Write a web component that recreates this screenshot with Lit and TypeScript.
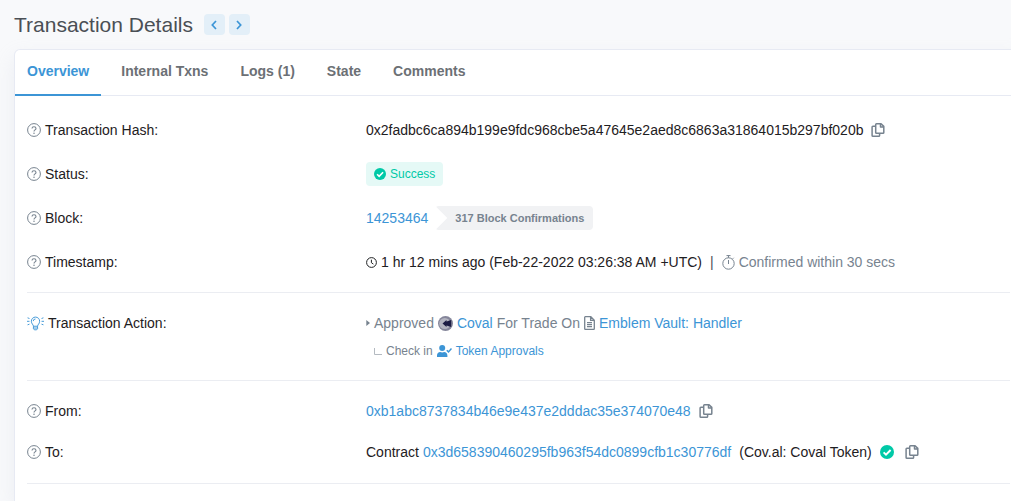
import { LitElement, html, css, svg } from "lit";
import { customElement, property, state } from "lit/decorators.js";
import { classMap } from "lit/directives/class-map.js";

const draw = (w: number, h: number, box: string, body: unknown, cls: string) => html`<svg class="icon ${cls}" width=${w} height=${h} viewBox=${box} aria-hidden="true">${body}</svg>`;

const icons = {
  help: () =>
    draw(14, 14, "0 0 14 14", svg`
      <circle cx="7" cy="7" r="6.4" fill="none" stroke="currentColor" stroke-width="1"/>
      <path d="M5 5.5C5 4.3 5.9 3.7 7 3.7s2 .7 2 1.7c0 1.4-2 1.5-2 3" fill="none" stroke="currentColor" stroke-width="1.1"/>
      <circle cx="7" cy="10.2" r=".75" fill="currentColor"/>`, "muted"),
  copy: () =>
    draw(14, 14, "0 0 14 14", svg`
      <path d="M5.500 .8h4.600L12.800 3.400v6.100a.8.8 0 0 1-.8.8H5.500a.8.8 0 0 1-.8-.8V1.600a.8.8 0 0 1 .8-.8zM9.500 .8v3.200h3.300M4.700 3.300H1.900a.8.8 0 0 0-.8.8v8.300a.8.8 0 0 0 .8.8h5.900a.8.8 0 0 0 .8-.8v-2.100" fill="none" stroke="currentColor" stroke-width="1.500" stroke-linejoin="round"/>`, "muted"),
  check: (size: number) =>
    draw(size, size, "0 0 14 14", svg`
      <circle cx="7" cy="7" r="7" fill="currentColor"/>
      <path d="M3.600 7.300l2.400 2.400 4.600-4.700" fill="none" stroke="#fff" stroke-width="1.900"/>`, "good"),
  clock: () =>
    draw(11, 11, "0 0 11 11", svg`
      <circle cx="5.500" cy="5.500" r="4.900" fill="none" stroke="currentColor" stroke-width="1"/>
      <path d="M5.400 2.700v3l2 1.400" fill="none" stroke="currentColor" stroke-width="1"/>`, ""),
  stopwatch: () =>
    draw(13, 15, "0 0 13 15", svg`
      <circle cx="6.500" cy="8.500" r="5.700" fill="none" stroke="currentColor"/>
      <path d="M4.500 .6h4M6.500 .6v2.200M6.500 5v4M10.700 3.800l1-1" fill="none" stroke="currentColor"/>`, "muted"),
  bulb: () =>
    draw(17, 15, "0 0 18 15", svg`
      <path d="M6.800 10.400c0-1.700-2.200-2.600-2.200-5.300a4.400 4.400 0 0 1 8.800 0c0 2.700-2.200 3.600-2.200 5.300zM6.800 10.400v2.600l1 1.200h2.400l1-1.200v-2.600M6.800 12.300h4.400M6.600 5A2.400 2.400 0 0 1 9 2.700M.6 1.500l2 .7M0 5.200h2.600M.6 8.900l2-.7M17.400 1.500l-2 .7M18 5.200h-2.600M17.400 8.900l-2-.7" fill="none" stroke="currentColor" stroke-width="1"/>`, "brand"),
  caret: () => draw(4, 6, "0 0 4 6", svg`<path d="M.3 0L4 3 .3 6z" fill="currentColor"/>`, "muted"),
  coin: () =>
    draw(15, 15, "0 0 15 15", svg`
      <circle cx="7.500" cy="7.500" r="7.500" fill="#85869a"/>
      <circle cx="6.800" cy="7.500" r="5.600" fill="#b3b4c0"/>
      <path d="M4.500 7.500L8.500 4v1.600l4.700-1.600v7L8.500 9.400V11z" fill="#1c1c44"/>`, ""),
  file: () =>
    draw(11, 14, "0 0 11 14", svg`
      <path d="M1.300 .7h5.500l3.500 3.500v8.500a.6.6 0 0 1-.6.6H1.300a.6.6 0 0 1-.6-.6V1.300a.6.6 0 0 1 .6-.6zM6.600 .7v3.700h3.700M3 6.600h5M3 8.600h5M3 10.600h5" fill="none" stroke="currentColor" stroke-width="1.300"/>`, "muted"),
  userCheck: () =>
    draw(15, 12, "0 0 15 12", svg`
      <circle cx="5.200" cy="3" r="3" fill="currentColor"/>
      <path d="M0 12v-1.600C0 8.400 1.400 7 3.200 7c1.300.5 2.700.5 4 0 1.800 0 3.200 1.400 3.200 3.400V12z" fill="currentColor"/>
      <path d="M9.800 5.200l1.700 1.700 3-3.400" fill="none" stroke="currentColor" stroke-width="1.500"/>`, "brand"),
  elbow: () => draw(8, 7, "0 0 8 7", svg`<path d="M.5 0v6.500H8" fill="none" stroke="#b4bac1"/>`, ""),
  chevron: (d: string) =>
    draw(6, 10, "0 0 6 10", svg`<path d=${d} fill="none" stroke="currentColor" stroke-width="1.700"/>`, ""),
};

const shared = css`
  .icon { display: block; flex: none; }
  .muted { color: #77838f; }
  .brand { color: #3c95d6; }
  .good { color: #00c9a7; }
`;

@customElement("detail-row")
export class DetailRow extends LitElement {
  @property() label = "";
  @property() icon: "help" | "bulb" = "help";

  static styles = [shared, css`
    :host { display: grid; grid-template-columns: 339px 1fr; align-items: start; }
    .label { display: flex; align-items: center; gap: 4px; line-height: 24px; }
    .value { min-width: 0; }
  `];

  render() {
    return html`
      <div class="label">${icons[this.icon]()}<span>${this.label}</span></div>
      <div class="value"><slot></slot></div>
    `;
  }
}

@customElement("app-root")
export class AppRoot extends LitElement {
  @state() private tab = "Overview";

  static styles = [shared, css`
    :host {
      display: block; box-sizing: border-box; min-height: 100vh; padding-left: 14px; overflow: hidden;
      background: #f8f9fb; color: #1e2022; font: 14px/24px "Liberation Sans", Arial, sans-serif;
    }
    a { color: #3c95d6; text-decoration: none; }
    button { border: 0; padding: 0; margin: 0; background: none; font: inherit; color: inherit; cursor: pointer; }
    .head { display: flex; align-items: center; gap: 11px; height: 49px; }
    h1 { margin: 0; font-size: 21px; line-height: 28px; font-weight: 400; color: #4a4f55; }
    .pager { display: flex; gap: 4px; }
    .step { display: grid; place-items: center; width: 21px; height: 21px; border-radius: 4px; background: #e3eff8; color: #3c95d6; }
    .card { min-height: calc(100vh - 49px); box-sizing: border-box; margin-right: -12px; background: #fff; border: 1px solid #e7eaf3; border-bottom: 0; border-radius: 6px 6px 0 0; box-shadow: 0 8px 20px rgba(189, 197, 209, 0.2); }
    .tabs { display: flex; gap: 8px; border-bottom: 1px solid #e7eaf3; }
    .tab { padding: 9px 12px 10px; margin-bottom: -1px; border-bottom: 2px solid transparent; font-weight: 700; color: #6c7075; line-height: 25px; }
    .tab.active { color: #3c95d6; border-color: #3c95d6; }
    .rows { padding: 0 12px; }
    .group { display: grid; gap: 20px; padding: 22px 0 18px; border-bottom: 1px solid #ebedf2; }
    .group.action { padding: 18px 0 17px; }
    .group.parties { gap: 17px; padding: 18px 0 19px; }
    .line { display: flex; align-items: center; gap: 4px; height: 24px; white-space: nowrap; }
    .copy, .verified { margin-left: 4px; }
    .verified { margin-right: 3px; }
    .badge { display: inline-flex; align-items: center; gap: 4px; padding: 0 8px; border-radius: 4px; background: #e5f9f6; color: #00c9a7; font-size: 12px; }
    .confirm { padding: 0 9px 0 20px; margin-left: 3px; border-radius: 4px; background: #f1f2f4; color: #77838f; font-size: 11px; font-weight: 700; clip-path: polygon(0 0, 100% 0, 100% 100%, 0 100%, 12px 50%); }
    .gray { color: #77838f; }
    .bar { padding: 0 4px; color: #4a4f55; }
    .name { margin-left: 4px; }
    .sub { margin-left: 8px; font-size: 12px; margin-top: 4px; }
  `];

  private copy(text: string) {
    return html`<button class="copy" aria-label="Copy" @click=${() => navigator.clipboard?.writeText(text)}>${icons.copy()}</button>`;
  }

  render() {
    const hash = "0x2fadbc6ca894b199e9fdc968cbe5a47645e2aed8c6863a31864015b297bf020b";
    const from = "0xb1abc8737834b46e9e437e2dddac35e374070e48";
    const to = "0x3d658390460295fb963f54dc0899cfb1c30776df";
    return html`
      <header class="head">
        <h1>Transaction Details</h1>
        <div class="pager">
          <button class="step" aria-label="Previous">${icons.chevron("M5 1L1.300 5 5 9")}</button>
          <button class="step" aria-label="Next">${icons.chevron("M1 1l3.700 4L1 9")}</button>
        </div>
      </header>
      <main class="card">
        <nav class="tabs">
          ${["Overview", "Internal Txns", "Logs (1)", "State", "Comments"].map((t) => html`
            <button class=${classMap({ tab: true, active: t === this.tab })} @click=${() => (this.tab = t)}>${t}</button>`)}
        </nav>
        <div class="rows">
          <section class="group">
            <detail-row label="Transaction Hash:">
              <div class="line"><span>${hash}</span>${this.copy(hash)}</div>
            </detail-row>
            <detail-row label="Status:">
              <div class="line"><span class="badge">${icons.check(12)}<span>Success</span></span></div>
            </detail-row>
            <detail-row label="Block:">
              <div class="line"><a href="#block">14253464</a><span class="confirm">317 Block Confirmations</span></div>
            </detail-row>
            <detail-row label="Timestamp:">
              <div class="line">${icons.clock()}<span>1 hr 12 mins ago (Feb-22-2022 03:26:38 AM +UTC)</span><span class="bar">|</span>${icons.stopwatch()}<span class="gray">Confirmed within 30 secs</span></div>
            </detail-row>
          </section>
          <section class="group action">
            <detail-row label="Transaction Action:" icon="bulb">
              <div class="line gray">${icons.caret()}<span>Approved</span>${icons.coin()}<a href="#coval">Coval</a><span>For Trade On</span>${icons.file()}<a href="#handler">Emblem Vault: Handler</a></div>
              <div class="line gray sub">${icons.elbow()}<span>Check in</span>${icons.userCheck()}<a href="#approvals">Token Approvals</a></div>
            </detail-row>
          </section>
          <section class="group parties">
            <detail-row label="From:">
              <div class="line"><a href="#from">${from}</a>${this.copy(from)}</div>
            </detail-row>
            <detail-row label="To:">
              <div class="line"><span>Contract</span><a href="#to">${to}</a><span class="name">(Cov.al: Coval Token)</span><span class="verified">${icons.check(14)}</span>${this.copy(to)}</div>
            </detail-row>
          </section>
        </div>
      </main>
    `;
  }
}
